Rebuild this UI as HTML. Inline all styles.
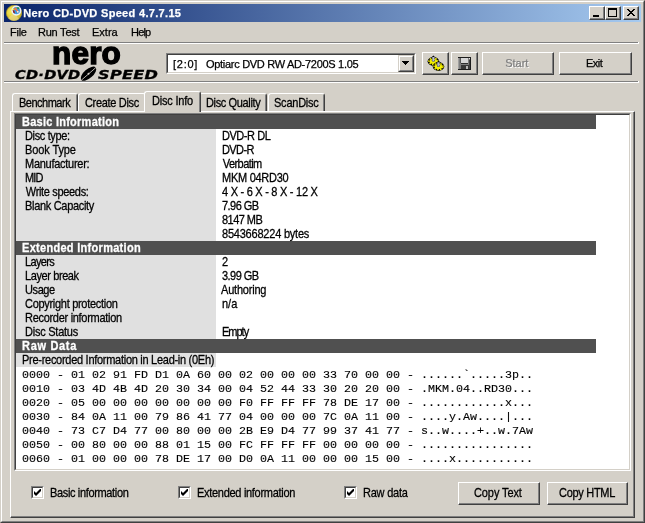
<!DOCTYPE html>
<html>
<head>
<meta charset="utf-8">
<title>Nero CD-DVD Speed 4.7.7.15</title>
<style>
html,body{margin:0;padding:0;}
body{width:645px;height:523px;overflow:hidden;background:#d4d0c8;font-family:"Liberation Sans","DejaVu Sans",sans-serif;font-size:11px;color:#000;position:relative;}
.abs{position:absolute;}
.t{position:absolute;white-space:nowrap;font-size:11px;line-height:14px;height:14px;-webkit-text-stroke:0.25px currentColor;}
.tb{font-weight:bold;}
.ms{transform-origin:0 11px;transform:scaleY(1.125);}
.th{font-weight:bold;color:#fff;}
#win{position:absolute;left:0;top:0;width:645px;height:523px;box-sizing:border-box;background:#d4d0c8;
 border-top:1px solid #d4d0c8;border-left:1px solid #d4d0c8;border-right:1px solid #404040;border-bottom:1px solid #404040;}
#win2{position:absolute;left:0;top:0;width:643px;height:521px;box-sizing:border-box;
 border-top:1px solid #fff;border-left:1px solid #fff;border-right:1px solid #808080;border-bottom:1px solid #808080;}
#title{position:absolute;left:4px;top:4px;width:637px;height:18px;background:linear-gradient(to right,#0a246a 0%,#a6caf0 100%);}
.cbtn{position:absolute;top:2px;width:16px;height:14px;box-sizing:border-box;background:#d4d0c8;
 border-top:1px solid #fff;border-left:1px solid #fff;border-right:1px solid #404040;border-bottom:1px solid #404040;}
.cbtn i{position:absolute;left:0;top:0;width:13px;height:11px;border-right:1px solid #808080;border-bottom:1px solid #808080;}
.hsep{position:absolute;height:1px;}
.btn{position:absolute;box-sizing:border-box;background:#d4d0c8;
 border-top:1px solid #fff;border-left:1px solid #fff;border-right:1px solid #404040;border-bottom:1px solid #404040;}
.btn:before{content:"";position:absolute;left:0;top:0;right:0;bottom:0;border-right:1px solid #808080;border-bottom:1px solid #808080;}
.tab{position:absolute;box-sizing:border-box;background:#d4d0c8;border-top:1px solid #fff;border-left:1px solid #fff;border-right:1px solid #404040;
 border-top-left-radius:3px;border-top-right-radius:3px;}
.tab:before{content:"";position:absolute;top:1px;bottom:0;right:0;width:1px;background:#808080;}
.hdr{position:absolute;left:16px;width:580px;height:14px;background:#505050;}
.lab{position:absolute;left:16px;width:200px;background:#e0e0e0;}
.hex{position:absolute;left:21.5px;white-space:pre;font-family:"Liberation Mono","DejaVu Sans Mono",monospace;font-size:10.5px;line-height:14px;height:14px;transform-origin:0 0;transform:scaleX(1.1111);margin-top:1px;-webkit-text-stroke:0.12px #000;}
.chk{position:absolute;width:13px;height:13px;box-sizing:border-box;background:#fff;border-top:1px solid #808080;border-left:1px solid #808080;border-right:1px solid #fff;border-bottom:1px solid #fff;}
.chk:before{content:"";position:absolute;left:0;top:0;width:9px;height:9px;border-top:1px solid #404040;border-left:1px solid #404040;border-right:1px solid #d4d0c8;border-bottom:1px solid #d4d0c8;}
.chk svg{position:absolute;left:2px;top:2px;}
</style>
</head>
<body>
<div id="win"><div id="win2"></div></div>

<!-- title bar -->
<div id="title">
  <svg class="abs" style="left:0px;top:0px" width="20" height="18" viewBox="0 0 20 18">
    <defs><radialGradient id="gd" cx="0.35" cy="0.4" r="0.7"><stop offset="0" stop-color="#f6ee6a"/><stop offset="0.5" stop-color="#e6d23a"/><stop offset="1" stop-color="#c8b432"/></radialGradient></defs>
    <circle cx="10" cy="9" r="7.6" fill="url(#gd)" stroke="#b8a028" stroke-width="0.8"/>
    <path d="M10 9 L4 14 A7.9 7.9 0 0 0 15 15 Z" fill="#e8d89a" opacity="0.6"/>
    <circle cx="12.4" cy="6.6" r="4.3" fill="#3a96dc" stroke="#eef0f6" stroke-width="1.5"/>
    <path d="M8.6 6 L9.5 8.8 L11 9.6 L10.2 6.4 Z" fill="#a01010"/>
    <path d="M13.2 3.2 L15.4 3.6 L15 5 L13 4.6 Z" fill="#28902c"/>
    <path d="M10.8 3.6 L14.2 8.2" stroke="#f07848" stroke-width="1.5"/>
    <path d="M12.6 4.6 L10.4 5.8" stroke="#f07848" stroke-width="1.2"/>
    <circle cx="9.4" cy="5.4" r="0.8" fill="#f4e020"/>
    <circle cx="13.8" cy="7.8" r="0.9" fill="#f4f4f4"/>
  </svg>
  <div class="cbtn" style="left:585px"><i></i><svg class="abs" style="left:3px;top:8px" width="6" height="2"><rect width="6" height="2" fill="#000"/></svg></div>
  <div class="cbtn" style="left:601px"><i></i><svg class="abs" style="left:2px;top:1px" width="9" height="9"><rect x="0.5" y="1" width="8" height="7.5" fill="none" stroke="#000"/><rect x="0" y="0" width="9" height="2" fill="#000"/></svg></div>
  <div class="cbtn" style="left:619px"><i></i><svg class="abs" style="left:3px;top:2px" width="8" height="7" shape-rendering="crispEdges"><path d="M0 0h2v1h1v1h2v-1h1v-1h2v1h-1v1h-1v1h-1v1h1v1h1v1h1v1h-2v-1h-1v-1h-2v1h-1v1h-2v-1h1v-1h1v-1h1v-1h-1v-1h-1v-1h-1z" fill="#000"/></svg></div>
</div>

<div class="hsep" style="left:4px;top:42px;width:635px;background:#fff"></div><div class="hsep" style="left:4px;top:42px;width:634px;background:#808080"></div>
<div class="hsep" style="left:4px;top:43px;width:635px;background:#fff"></div>

<!-- logo -->
<svg class="abs" style="left:78px;top:64px" width="22" height="20" viewBox="0 0 22 20"><g transform="rotate(-41 10.5 9.7)"><ellipse cx="10.5" cy="9.7" rx="9.5" ry="4.5" fill="#000"/><path d="M1 9.9 L20 9.9" stroke="#d4d0c8" stroke-width="0.8"/><circle cx="10.5" cy="9.7" r="1" fill="#d4d0c8"/></g></svg>

<!-- combo -->
<div class="abs" style="left:166px;top:53px;width:250px;height:21px;box-sizing:border-box;background:#fff;border-top:1px solid #808080;border-left:1px solid #808080;border-right:1px solid #fff;border-bottom:1px solid #fff;">
  <div class="abs" style="left:0;top:0;right:0;bottom:0;border-top:1px solid #404040;border-left:1px solid #404040;border-right:1px solid #d4d0c8;border-bottom:1px solid #d4d0c8;"></div>
  <div class="abs" style="left:231px;top:1px;width:16px;height:17px;box-sizing:border-box;background:#d4d0c8;border-top:1px solid #d4d0c8;border-left:1px solid #d4d0c8;border-right:1px solid #404040;border-bottom:1px solid #404040;"><div class="abs" style="left:0;top:0;right:0;bottom:0;border-top:1px solid #fff;border-left:1px solid #fff;border-right:1px solid #808080;border-bottom:1px solid #808080;"></div><svg class="abs" style="left:3px;top:5px" width="7" height="4" shape-rendering="crispEdges"><path d="M0 0h7v1h-1v1h-1v1h-1v1h-1v-1h-1v-1h-1v-1h-1z" fill="#000"/></svg></div>
</div>

<!-- toolbar buttons -->
<div class="btn" style="left:422px;top:52px;width:27px;height:23px;">
  <svg class="abs" style="left:3px;top:1px" width="20" height="18" viewBox="425 53 20 18">
    <ellipse cx="432.4" cy="60.3" rx="5.8" ry="4.4" fill="#000"/>
    <ellipse cx="432.4" cy="60.3" rx="4.5" ry="3.2" fill="none" stroke="#f4f000" stroke-width="1.3" stroke-dasharray="1.7 1.1"/>
    <ellipse cx="432.4" cy="60.3" rx="3.8" ry="2.6" fill="#f4f000"/>
    <ellipse cx="432.4" cy="59.599999999999994" rx="1.7" ry="1" fill="#000"/>
    <rect x="431.29999999999995" y="55.699999999999996" width="2.2" height="4.6" fill="#c0c4d8"/>
    <rect x="431.29999999999995" y="55.699999999999996" width="0.8" height="4.6" fill="#787c94"/>
    <path d="M430.9 56.0 L432.4 54.5 L433.9 56.0 Z" fill="#000"/>
    <ellipse cx="437.5" cy="65.5" rx="5.8" ry="4.4" fill="#000"/>
    <ellipse cx="437.5" cy="65.5" rx="4.5" ry="3.2" fill="none" stroke="#f4f000" stroke-width="1.3" stroke-dasharray="1.7 1.1"/>
    <ellipse cx="437.5" cy="65.5" rx="3.8" ry="2.6" fill="#f4f000"/>
    <ellipse cx="437.5" cy="64.8" rx="1.7" ry="1" fill="#000"/>
    <rect x="436.4" y="60.9" width="2.2" height="4.6" fill="#c0c4d8"/>
    <rect x="436.4" y="60.9" width="0.8" height="4.6" fill="#787c94"/>
    <path d="M436.0 61.2 L437.5 59.7 L439.0 61.2 Z" fill="#000"/>
  </svg>
</div>
<div class="btn" style="left:451px;top:52px;width:27px;height:23px;">
  <svg class="abs" style="left:6px;top:4px" width="14" height="14" viewBox="458 57 14 14" shape-rendering="crispEdges">
    <rect x="458" y="57" width="13" height="13" fill="#1c1c1c"/>
    <rect x="458" y="58" width="12" height="11" fill="#7e7e7e"/>
    <rect x="458" y="58" width="1" height="11" fill="#a0a0a0"/>
    <rect x="461" y="58" width="7" height="5" fill="#d6d6d6"/>
    <rect x="460" y="58" width="1" height="5" fill="#585858"/>
    <rect x="461" y="63" width="7" height="1" fill="#303030"/>
    <rect x="461" y="65" width="8" height="4" fill="#383838"/>
    <rect x="466" y="66" width="2" height="3" fill="#b8b8b8"/>
    <rect x="469" y="58" width="1" height="1" fill="#e8e8e8"/>
    <rect x="469" y="60" width="1" height="9" fill="#404040"/>
  </svg>
</div>
<div class="btn" style="left:482px;top:52px;width:72px;height:23px;"></div>
<div class="btn" style="left:559px;top:52px;width:73px;height:23px;"></div>

<div class="hsep" style="left:4px;top:81px;width:635px;background:#fff"></div><div class="hsep" style="left:4px;top:81px;width:634px;background:#808080"></div>
<div class="hsep" style="left:4px;top:82px;width:635px;background:#fff"></div>

<!-- tab panel -->
<div class="abs" style="left:10px;top:111px;width:625px;height:407px;box-sizing:border-box;border-top:1px solid #fff;border-left:1px solid #fff;border-right:1px solid #404040;border-bottom:1px solid #404040;">
  <div class="abs" style="left:0;top:0;right:0;bottom:0;border-right:1px solid #808080;border-bottom:1px solid #808080;"></div>
</div>
<!-- tabs -->
<div class="tab" style="left:12px;top:93px;width:66px;height:18px;"></div>
<div class="tab" style="left:78px;top:93px;width:68px;height:18px;"></div>
<div class="tab" style="left:199px;top:93px;width:68px;height:18px;"></div>
<div class="tab" style="left:268px;top:93px;width:57px;height:18px;"></div>
<div class="tab" style="left:144px;top:91px;width:57px;height:21px;"></div>

<!-- info box -->
<div class="abs" style="left:14px;top:113px;width:617px;height:358px;box-sizing:border-box;background:#fff;border-top:1px solid #808080;border-left:1px solid #808080;border-right:1px solid #fff;border-bottom:1px solid #fff;">
  <div class="abs" style="left:0;top:0;right:0;bottom:0;border-top:1px solid #404040;border-left:1px solid #404040;border-right:1px solid #d4d0c8;border-bottom:1px solid #d4d0c8;"></div>
</div>

<div class="hdr" style="top:115px"></div>
<div class="lab" style="top:129px;height:112px"></div>
<div class="hdr" style="top:241px"></div>
<div class="lab" style="top:255px;height:84px"></div>
<div class="hdr" style="top:339px"></div>
<div class="lab" style="top:353px;height:14px"></div>


<!-- checkboxes -->
<div class="chk" style="left:31px;top:486px"><svg width="7" height="7" viewBox="0 0 7 7"><path d="M0 2v3l2 2l5-5v-3l-5 5z" fill="#000"/></svg></div>
<div class="chk" style="left:178px;top:486px"><svg width="7" height="7" viewBox="0 0 7 7"><path d="M0 2v3l2 2l5-5v-3l-5 5z" fill="#000"/></svg></div>
<div class="chk" style="left:344px;top:486px"><svg width="7" height="7" viewBox="0 0 7 7"><path d="M0 2v3l2 2l5-5v-3l-5 5z" fill="#000"/></svg></div>

<div class="btn" style="left:458px;top:482px;width:82px;height:23px;"></div>
<div class="btn" style="left:547px;top:482px;width:81px;height:23px;"></div>

<div id="txt" style="position:absolute;left:0;top:0;width:645px;height:523px;will-change:transform;">
<div class="abs" id="nero" style="left:52px;top:33px;font-size:31.5px;font-weight:bold;letter-spacing:0.2px;line-height:40px;-webkit-text-stroke:1.4px #000;">nero</div>
<div class="abs" id="cds1" style="left:15px;top:66px;font-family:'DejaVu Sans','Liberation Sans',sans-serif;font-size:11.5px;font-weight:bold;font-style:oblique;white-space:nowrap;line-height:18px;transform-origin:0 0;transform:scaleX(1.27);-webkit-text-stroke:0.3px #000;letter-spacing:0.2px;">CD·DVD</div>
<div class="abs" id="cds2" style="left:98px;top:66px;font-family:'DejaVu Sans','Liberation Sans',sans-serif;font-size:11.5px;font-weight:bold;font-style:oblique;white-space:nowrap;line-height:18px;transform-origin:0 0;transform:scaleX(1.40);-webkit-text-stroke:0.3px #000;letter-spacing:0.2px;">SPEED</div>
<div class="hex" style="top:367px">0000 - 01 02 91 FD D1 0A 60 00 02 00 00 00 33 70 00 00 - ......`.....3p..</div>
<div class="hex" style="top:381px">0010 - 03 4D 4B 4D 20 30 34 00 04 52 44 33 30 20 20 00 - .MKM.04..RD30...</div>
<div class="hex" style="top:395px">0020 - 05 00 00 00 00 00 00 00 F0 FF FF FF 78 DE 17 00 - ............x...</div>
<div class="hex" style="top:409px">0030 - 84 0A 11 00 79 86 41 77 04 00 00 00 7C 0A 11 00 - ....y.Aw....|...</div>
<div class="hex" style="top:423px">0040 - 73 C7 D4 77 00 80 00 00 2B E9 D4 77 99 37 41 77 - s..w....+..w.7Aw</div>
<div class="hex" style="top:437px">0050 - 00 80 00 00 88 01 15 00 FC FF FF FF 00 00 00 00 - ................</div>
<div class="hex" style="top:451px">0060 - 01 00 00 00 78 DE 17 00 D0 0A 11 00 00 00 15 00 - ....x...........</div>
<div id="ttl" class="t tb" style="left:23.20px;top:6px;letter-spacing:0.320px;color:#fff">Nero CD-DVD Speed 4.7.7.15</div>
<div id="m1" class="t tm" style="left:10.00px;top:25px;letter-spacing:-0.267px;">File</div>
<div id="m2" class="t tm" style="left:38.00px;top:25px;letter-spacing:-0.229px;">Run Test</div>
<div id="m3" class="t tm" style="left:92.00px;top:25px;letter-spacing:0.000px;">Extra</div>
<div id="m4" class="t tm" style="left:131.00px;top:25px;letter-spacing:-0.800px;">Help</div>
<div id="combo" class="t tm" style="left:173.00px;top:57px;letter-spacing:0.729px;">[2:0]</div>
<div id="combo2" class="t tm" style="left:206.00px;top:57px;letter-spacing:-0.296px;">Optiarc DVD RW AD-7200S 1.05</div>
<div id="start" class="t tm" style="left:505.20px;top:56px;letter-spacing:0.000px;color:#808080;text-shadow:1px 1px 0 #fff">Start</div>
<div id="exit" class="t tm" style="left:586.00px;top:56px;letter-spacing:-0.533px;">Exit</div>
<div id="tab1" class="t ms" style="left:19.00px;top:96px;letter-spacing:-0.500px;">Benchmark</div>
<div id="tab2" class="t ms" style="left:85.00px;top:96px;letter-spacing:-0.320px;">Create Disc</div>
<div id="tab3" class="t ms" style="left:152.00px;top:94px;letter-spacing:-0.200px;">Disc Info</div>
<div id="tab4" class="t ms" style="left:206.00px;top:96px;letter-spacing:-0.364px;">Disc Quality</div>
<div id="tab5" class="t ms" style="left:274.00px;top:96px;letter-spacing:-0.229px;">ScanDisc</div>
<div id="h1" class="t th ms" style="left:22.00px;top:115px;letter-spacing:0.250px;">Basic Information</div>
<div id="h2" class="t th ms" style="left:22.00px;top:241px;letter-spacing:0.295px;">Extended Information</div>
<div id="h3" class="t th ms" style="left:22.00px;top:339px;letter-spacing:0.686px;">Raw Data</div>
<div id="l0" class="t ms" style="left:25.00px;top:129px;letter-spacing:-0.356px;">Disc type:</div>
<div id="v0" class="t ms" style="left:222.00px;top:129px;letter-spacing:-0.457px;">DVD-R DL</div>
<div id="l1" class="t ms" style="left:25.00px;top:143px;letter-spacing:-0.100px;">Book Type</div>
<div id="v1" class="t ms" style="left:222.00px;top:143px;letter-spacing:-0.600px;">DVD-R</div>
<div id="l2" class="t ms" style="left:25.00px;top:157px;letter-spacing:-0.267px;">Manufacturer:</div>
<div id="v2" class="t ms" style="left:222.80px;top:157px;letter-spacing:-0.571px;">Verbatim</div>
<div id="l3" class="t ms" style="left:25.00px;top:171px;letter-spacing:-0.800px;">MID</div>
<div id="v3" class="t ms" style="left:222.00px;top:171px;letter-spacing:-0.267px;">MKM 04RD30</div>
<div id="l4" class="t ms" style="left:25.80px;top:185px;letter-spacing:-0.333px;">Write speeds:</div>
<div id="v4" class="t ms" style="left:222.00px;top:185px;letter-spacing:-0.267px;">4 X - 6 X - 8 X - 12 X</div>
<div id="l5" class="t ms" style="left:25.00px;top:199px;letter-spacing:-0.308px;">Blank Capacity</div>
<div id="v5" class="t ms" style="left:222.00px;top:199px;letter-spacing:-0.533px;">7.96 GB</div>
<div id="v6" class="t ms" style="left:222.00px;top:213px;letter-spacing:-0.533px;">8147 MB</div>
<div id="v7" class="t ms" style="left:222.00px;top:227px;letter-spacing:-0.213px;">8543668224 bytes</div>
<div id="el0" class="t ms" style="left:25.00px;top:255px;letter-spacing:-0.640px;">Layers</div>
<div id="ev0" class="t ms" style="left:222.00px;top:255px;letter-spacing:0.000px;">2</div>
<div id="el1" class="t ms" style="left:25.00px;top:269px;letter-spacing:-0.400px;">Layer break</div>
<div id="ev1" class="t ms" style="left:222.00px;top:269px;letter-spacing:-0.533px;">3.99 GB</div>
<div id="el2" class="t ms" style="left:25.00px;top:283px;letter-spacing:-0.400px;">Usage</div>
<div id="ev2" class="t ms" style="left:221.00px;top:283px;letter-spacing:-0.200px;">Authoring</div>
<div id="el3" class="t ms" style="left:25.00px;top:297px;letter-spacing:-0.295px;">Copyright protection</div>
<div id="ev3" class="t ms" style="left:222.00px;top:297px;letter-spacing:0.000px;">n/a</div>
<div id="el4" class="t ms" style="left:25.00px;top:311px;letter-spacing:-0.295px;">Recorder information</div>
<div id="el5" class="t ms" style="left:25.00px;top:325px;letter-spacing:-0.240px;">Disc Status</div>
<div id="ev5" class="t ms" style="left:222.00px;top:325px;letter-spacing:-1.000px;">Empty</div>
<div id="pre" class="t ms" style="left:22.00px;top:353px;letter-spacing:-0.280px;">Pre-recorded Information in Lead-in (0Eh)</div>
<div id="c1" class="t ms" style="left:50.00px;top:486px;letter-spacing:-0.350px;">Basic information</div>
<div id="c2" class="t ms" style="left:197.00px;top:486px;letter-spacing:-0.295px;">Extended information</div>
<div id="c3" class="t ms" style="left:363.00px;top:486px;letter-spacing:-0.229px;">Raw data</div>
<div id="b1" class="t ms" style="left:474.00px;top:486px;letter-spacing:-0.100px;">Copy Text</div>
<div id="b2" class="t ms" style="left:559.00px;top:486px;letter-spacing:-0.300px;">Copy HTML</div>
</div>
</body>
</html>
